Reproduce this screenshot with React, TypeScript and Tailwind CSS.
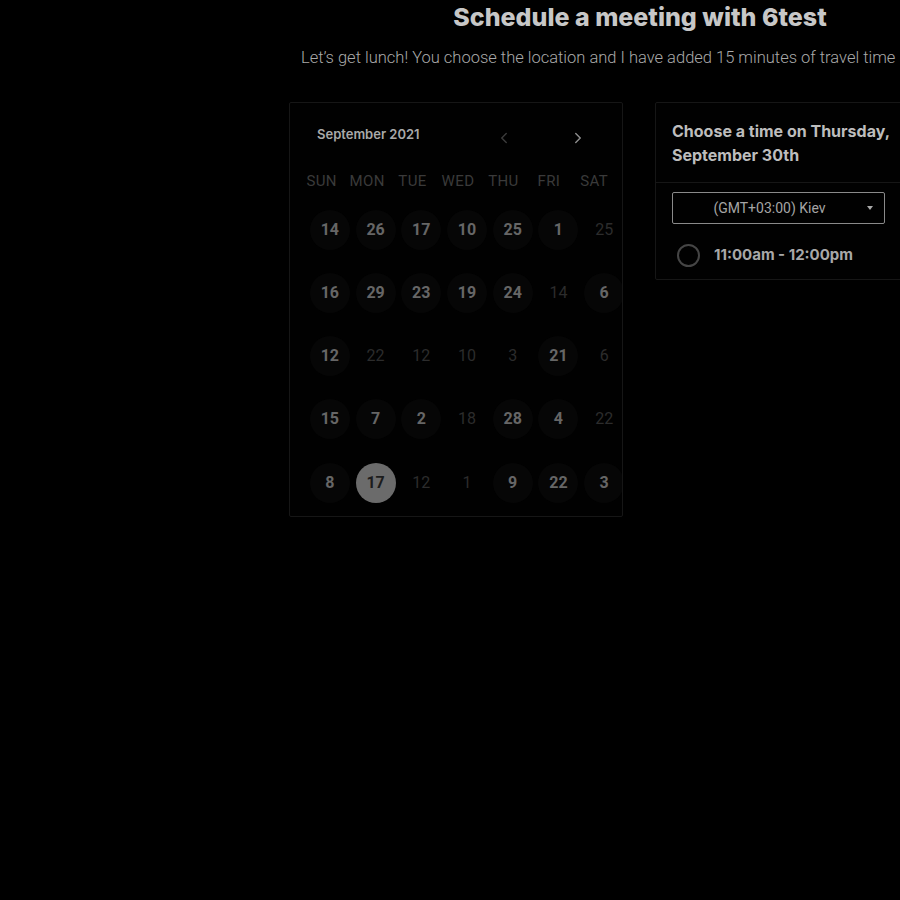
import { ChevronLeft, ChevronRight } from "lucide-react";

type Day = { n: number; kind: "on" | "off" | "sel" };

const on = (n: number): Day => ({ n, kind: "on" });
const off = (n: number): Day => ({ n, kind: "off" });

const WEEKDAYS = ["SUN", "MON", "TUE", "WED", "THU", "FRI", "SAT"];

const ROWS: Day[][] = [
  [on(14), on(26), on(17), on(10), on(25), on(1), off(25)],
  [on(16), on(29), on(23), on(19), on(24), off(14), on(6)],
  [on(12), off(22), off(12), off(10), off(3), on(21), off(6)],
  [on(15), on(7), on(2), off(18), on(28), on(4), off(22)],
  [on(8), { n: 17, kind: "sel" }, off(12), off(1), on(9), on(22), on(3)],
];

function DayCell({ day }: { day: Day }) {
  if (day.kind === "sel") {
    return (
      <div className="w-10 h-10 rounded-full bg-[#6b6b6b] flex items-center justify-center text-[16px] font-bold text-[#1c1c1c]">
        {day.n}
      </div>
    );
  }
  if (day.kind === "off") {
    return (
      <div className="w-10 h-10 flex items-center justify-center text-[16px] text-[#2c2c2c]">{day.n}</div>
    );
  }
  return (
    <div className="w-10 h-10 rounded-full bg-[#060606] flex items-center justify-center text-[16px] font-bold text-[#666666]">
      {day.n}
    </div>
  );
}

function Calendar() {
  return (
    <div className="w-[334px] h-[415px] shrink-0 border border-[#161616] bg-[#010101] rounded-[2px] overflow-hidden">
      <div className="flex items-center h-[64px] pl-[27px]">
        <span className="font-['Inter'] text-[13px] font-semibold text-[#a9a9a9] w-[178px] -mt-[1px]">September 2021</span>
        <ChevronLeft className="w-[18px] h-[18px] text-[#3a3a3a] mt-[6px]" strokeWidth={2} />
        <ChevronRight className="w-[18px] h-[18px] text-[#8a8a8a] mt-[6px] ml-[56px]" strokeWidth={2} />
      </div>
      <div className="w-[337px] pl-[17px] font-['Roboto']">
        <div className="grid grid-cols-7 h-[28px] items-center w-[318px] -ml-[8px]">
          {WEEKDAYS.map((w) => (
            <div key={w} className="text-center text-[15px] tracking-[0.4px] text-[#3a3a3a]">
              {w}
            </div>
          ))}
        </div>
        <div className="flex flex-col mt-[3px]">
          {ROWS.map((row, ri) => (
            <div key={ri} className="grid grid-cols-7 h-[63.25px] items-center">
              {row.map((d, di) => (
                <div key={di} className="flex justify-center">
                  <DayCell day={d} />
                </div>
              ))}
            </div>
          ))}
        </div>
      </div>
    </div>
  );
}

function TimePanel() {
  return (
    <div className="w-[262px] h-[178px] shrink-0 border border-[#161616] bg-[#010101] rounded-[2px]">
      <div className="pl-[16px] pt-[16px] pb-[15px] border-b border-[#161616] font-['Inter'] text-[16px] leading-[24px] font-bold text-[#bdbdbd]">
        Choose a time on Thursday,
        <br />
        September 30th
      </div>
      <div className="px-[16px] pt-[9px]">
        <div className="w-[213px] h-[32px] border border-[#8a8a8a] rounded-[2px] flex items-center relative">
          <span className="w-full text-center font-['Roboto'] text-[14px] text-[#a5a5a5] pr-[18px]">(GMT+03:00) Kiev</span>
          <span className="absolute right-[11px] top-[13px] w-0 h-0 border-l-[3.5px] border-r-[3.5px] border-t-[4px] border-l-transparent border-r-transparent border-t-[#aaaaaa]" />
        </div>
        <div className="flex items-center h-[46px] mt-[8px] pl-[5px]">
          <div className="w-[23px] h-[23px] rounded-full border-2 border-[#454545]" />
          <span className="ml-[14px] font-['Inter'] text-[15px] font-bold text-[#a8a8a8]">11:00am - 12:00pm</span>
        </div>
      </div>
    </div>
  );
}

export default function App() {
  return (
    <div className="w-[900px] h-[900px] bg-black overflow-hidden">
      <div className="w-[700px] ml-[290px] pt-[1px] text-center font-['Inter'] text-[25px] leading-[32px] font-extrabold text-[#c7c7c7]">
        Schedule a meeting with 6test
      </div>
      <div className="ml-[301px] mt-[14px] whitespace-nowrap font-['Roboto'] font-light text-[16.5px] leading-[22px] text-[#a9a9a9]">
        Let’s get lunch! You choose the location and I have added 15 minutes of travel time
      </div>
      <div className="flex gap-[32px] ml-[289px] mt-[33px]">
        <Calendar />
        <TimePanel />
      </div>
    </div>
  );
}
